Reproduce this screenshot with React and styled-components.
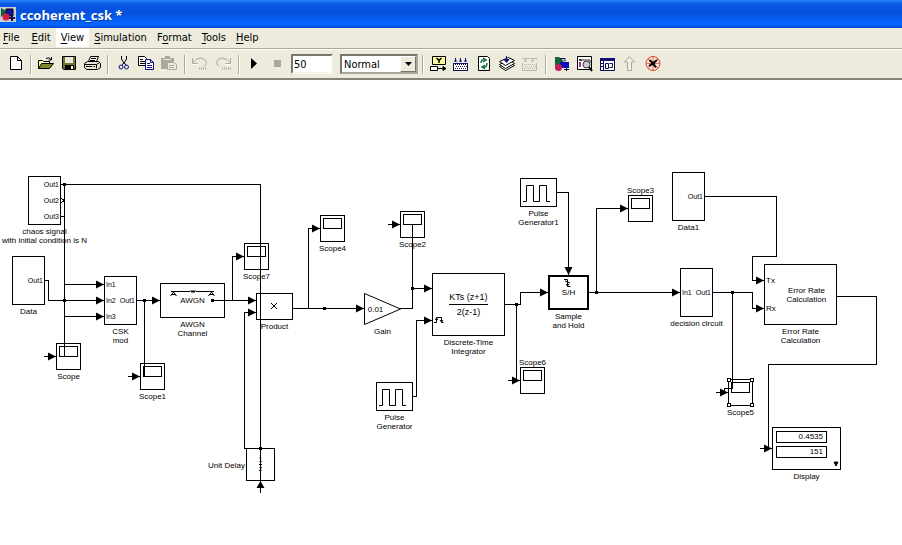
import React, { useState } from 'react'
import styled, { createGlobalStyle, css } from 'styled-components'

const menus = ['File', 'Edit', 'View', 'Simulation', 'Format', 'Tools', 'Help']
// index of the underlined access key, when it is not the first letter
const accessKey = { Format: 1 }

/* ---------- toolbar icons ---------- */

const Dots = ({ color }) => (
  <g stroke={color} fill="none">
    <path d="M3.5 9v8M17.5 9v8M3 16.5h15" />
    <path d="M5 10.5h12M6 12.5h12M5 14.5h12" strokeDasharray="1 1" />
  </g>
)

const icons = {
  new: <path d="M6.5 2.5h7l4 4v9h-11zM13.5 2.5v4h4" fill="#fff" stroke="#000" />,
  open: (
    <g stroke="#000">
      <path d="M3.5 14.5v-8h4l1 1h6v3" fill="#ffffb0" />
      <path d="M3.5 14.5l3-5h12l-4 5z" fill="#85852a" />
      <path d="M11 4.5q3-2 5 1M16.5 3v3h-3" fill="none" />
    </g>
  ),
  save: (
    <g>
      <path d="M4.5 2.5h13v13h-12l-1-1z" fill="#74742c" stroke="#000" />
      <path d="M7 3h8v6H7z" fill="#e9e8da" />
      <path d="M7 11h9v4H7z" fill="#000" />
      <path d="M13 12h2v3h-2z" fill="#fff" />
    </g>
  ),
  print: (
    <g stroke="#000" fill="#fff">
      <path d="M7.5 7.5l2-5h8l-2 5z" />
      <path d="M3.5 9.5l3-2h11l2 2v4l-3 2h-11l-2-2z" fill="#e5e4d5" />
      <path d="M3.5 10.5h12v4M15.5 10.5l3-2M10 4.5h5M9 6.5h5M5 12.5h9" fill="none" />
      <path d="M11 12.5h2" stroke="#b9b900" />
    </g>
  ),
  cut: (
    <g fill="none">
      <path d="M9.5 2v3l3 5M14.5 2v3l-3 5" stroke="#000" />
      <circle cx="9" cy="13" r="2" stroke="#101080" />
      <circle cx="14.5" cy="13" r="2" stroke="#101080" />
      <path d="M11.5 9l-1.5 2.5M12.5 9l1.5 2.5" stroke="#101080" />
    </g>
  ),
  copy: (
    <g>
      <path d="M3.5 2.5h6l2 2v7h-8z" fill="#fff" stroke="#000" />
      <path d="M5 5.5h3M5 7.5h5M5 9.5h5" stroke="#000" />
      <path d="M10.5 5.5h5l3 3v7h-8z" fill="#fff" stroke="#101080" />
      <path d="M15.5 5.5v3h3M12 9.5h3M12 11.5h5M12 13.5h5" fill="none" stroke="#101080" />
    </g>
  ),
  paste: (
    <g>
      <path d="M3 4h4V2h5v2h4v11H3z" fill="#aaa999" />
      <path d="M6 5.5h7" stroke="#ecebdc" />
      <path d="M9.5 8.5h6l3 2v5h-9z" fill="#ecebdc" stroke="#aaa999" />
      <path d="M11 11.5h5M11 13.5h5" stroke="#aaa999" />
    </g>
  ),
  undo: (
    <g fill="none" stroke="#aaa999">
      <path d="M4 8.5l3-3q5-3 9 0q3 4-1 7" />
      <path d="M3.5 4v5.5h5" />
      <path d="M10 14.5h8" strokeDasharray="1 1" strokeWidth="2" />
      <path d="M3 10.5h6" stroke="#fff" />
    </g>
  ),
  redo: (
    <g fill="none" stroke="#aaa999">
      <path d="M18 8.5l-3-3q-5-3-9 0q-3 4 1 7" />
      <path d="M18.5 4v5.5h-5" />
      <path d="M10 14.5h9" strokeDasharray="1 1" strokeWidth="2" />
      <path d="M13 10.5h6" stroke="#fff" />
    </g>
  ),
  play: <path d="M8 4l6 5.5L8 15z" fill="#000" />,
  stop: <path d="M8 6h7v7H8z" fill="#aaa999" />,
  model: (
    <g stroke="#000">
      <path d="M5.5 2.5h13v8h-13z" fill="#ffffa0" />
      <path d="M9.5 4l2.5 2.5L14.5 4M12 6v3" fill="none" strokeWidth="1.5" />
      <path d="M3.5 12.5h7v4h-7z" fill="#fff" />
      <path d="M10.5 14.5h7" fill="none" />
      <path d="M16 12.5l3 2-3 2z" />
    </g>
  ),
  build: (
    <g>
      <path d="M3 9h15v8H3z" fill="#fff" />
      <Dots color="#101040" />
      <path d="M5.5 4v4M10.5 4v4M15.5 4v4M4 7h3M9 7h3M14 7h3M3 9.5h15" stroke="#101080" />
    </g>
  ),
  refresh: (
    <g>
      <path d="M5.5 2.5h9l2 2v12h-11z" fill="#fff" stroke="#000" />
      <path d="M8 9q0-4 4-3M10 4l3 2-3 2M14 9q0 5-4 4M12 11l-3 2 3 2" fill="none" stroke="#147044" strokeWidth="1.5" />
    </g>
  ),
  stack: (
    <g stroke="#000" fill="#fff">
      <path d="M3.5 12.5l6 4 9-5-6-4z" />
      <path d="M3.5 10.5l6 4 9-5-6-4z" />
      <path d="M3.5 7.5l6 4 9-5-6-3z" />
      <path d="M10.5 2v6M8 5.5l2.5 3 2.5-3z" stroke="#101080" fill="#101080" />
    </g>
  ),
  buildOff: (
    <g>
      <Dots color="#b9b8a8" />
      <path d="M3 4.5h15M6.5 4v4M13.5 4v4M5 7h3M12 7h3" stroke="#b9b8a8" />
    </g>
  ),
  library: (
    <g>
      <path d="M5 3h4l5 4-5 5H5z" fill="#17603c" />
      <path d="M10 8h9v6h-9z" fill="#0c0cb4" />
      <circle cx="8.5" cy="13.5" r="3.5" fill="#c8195a" />
      <path d="M16.5 13v4M14 15.5h5" stroke="#101040" />
      <path d="M10 4.5h5v3" fill="none" stroke="#101040" />
    </g>
  ),
  explore: (
    <g>
      <path d="M4.5 2.5h14v13h-14z" fill="#fff" stroke="#000" />
      <path d="M6 5h3v2H6z" fill="#444" />
      <path d="M9 6h8v3" fill="none" stroke="#333" />
      <path d="M6 8h2v5H6z" fill="#b12aa0" />
      <circle cx="13.5" cy="10.5" r="3.5" fill="#c8d0d0" stroke="#333" />
      <path d="M16 13l3 4" stroke="#000" strokeWidth="2" />
    </g>
  ),
  debug: (
    <g>
      <path d="M4.5 4.5h14v12h-14z" fill="#fff" stroke="#101050" />
      <path d="M4 4h15v3H4z" fill="#101070" />
      <path d="M7.5 7v9M9.5 9.5h3v5h-3zM13.5 9.5h3v4h-3M5 9.5h2M5 12.5h2" fill="none" stroke="#101050" />
    </g>
  ),
  up: <path d="M10.5 2.5l5 5.5h-3v8.5h-4V8h-3z" fill="#f1f0e4" stroke="#aaa999" />,
  fan: (
    <g fill="none">
      <circle cx="11" cy="9.5" r="7" stroke="#d8442e" fill="#f8e4d8" />
      <path d="M6 5l10 9M16 5L6 14M11 3v13M4 9.5h14" stroke="#e07058" />
      <path d="M7.5 6l3.5 3.5 4-3.5M7 12l4-2.500 3 4" stroke="#000" strokeWidth="2" />
      <circle cx="11" cy="9.5" r="2" fill="#000" />
    </g>
  ),
}

const leftTools = [
  [['new', 'New model']],
  [['open', 'Open'], ['save', 'Save'], ['print', 'Print']],
  [['cut', 'Cut'], ['copy', 'Copy'], ['paste', 'Paste']],
  [['undo', 'Undo'], ['redo', 'Redo']],
  [['play', 'Start simulation'], ['stop', 'Stop']],
]

const rightTools = [
  [['model', 'Display block output'], ['build', 'Build model'], ['refresh', 'Refresh blocks'], ['stack', 'Update diagram'], ['buildOff', 'Build subsystem']],
  [['library', 'Library browser'], ['explore', 'Model explorer'], ['debug', 'Model browser'], ['up', 'Go to parent'], ['fan', 'Debug']],
]

const disabledTools = ['paste', 'undo', 'redo', 'stop', 'buildOff', 'up']

/* ---------- model data ---------- */

const scopes = [
  { name: 'Scope', x: 56, y: 263 },
  { name: 'Scope1', x: 140, y: 283 },
  { name: 'Scope7', x: 244, y: 163 },
  { name: 'Scope4', x: 320, y: 135 },
  { name: 'Scope2', x: 400, y: 131 },
  { name: 'Scope3', x: 628, y: 115, side: 'top' },
  { name: 'Scope6', x: 520, y: 287, side: 'top' },
  { name: 'Scope5', x: 728, y: 299, selected: true },
]

const subsystems = [
  { name: 'chaos signal\nwith initial condition is N', x: 28, y: 96, outs: ['Out1', 'Out2', 'Out3'] },
  { name: 'Data', x: 12, y: 176, outs: ['Out1'] },
  { name: 'CSK\nmod', x: 104, y: 196, ins: ['In1', 'In2', 'In3'], outs: ['Out1'] },
  { name: 'Data1', x: 672, y: 92, outs: ['Out1'] },
  { name: 'decision circuit', x: 680, y: 188, ins: ['In1'], outs: ['Out1'] },
]

const wires = [
  'M61 104.5H260.5V401',
  'M64.5 104V276.5H59',
  'M61 136.5H64',
  'M45 200.5H48.5V220.5H104',
  'M64 204.5H104',
  'M64 236.5H104',
  'M44 276.5H56',
  'M137 220.5H160',
  'M144.5 220V296.5',
  'M128 296.5H140',
  'M212 220.5H256',
  'M232.5 220V176.5H244',
  'M247 368.5H244.5V232.5H256',
  'M260.5 401V413',
  'M293 228.5H364',
  'M308.5 228V148.5H320',
  'M400 228.5H412.5V144',
  'M388 144.5H400',
  'M412 208.5H432',
  'M413 316.5H416.5V240.5H432',
  'M505 224.5H520.5V212.5H548',
  'M516.5 224V300.5M508 300.5H520',
  'M557 112.5H568.5V195',
  'M589 212.5H680',
  'M596.5 212V128.5H628',
  'M705 116.5H776.5V176.5H752.5V200.5H764',
  'M713 212.5H752.5V228.5H764',
  'M732.5 212V308.5H724.5V312M716 312.5H728',
  'M837 216.5H876.5V284.5H768.5V368M760 368.5H772',
]

const arrows = [
  [104, 204], [104, 220], [104, 236], [56, 276], [160, 220], [140, 296],
  [256, 220], [244, 176], [256, 232], [320, 148], [364, 228], [400, 144],
  [432, 208], [432, 240], [548, 212], [520, 300], [628, 128], [680, 212],
  [764, 200], [764, 228], [728, 312], [772, 368],
]

const joints = [
  [64, 104], [64, 220], [144, 220], [212, 220], [260, 368], [324, 228],
  [412, 208], [516, 224], [596, 212], [732, 212],
]

/* ---------- parts ---------- */

const Tool = ({ tool }) => {
  const [id, label] = tool
  return (
    <ToolButton type="button" aria-label={label} title={label} disabled={disabledTools.includes(id)}>
      <svg width="21" height="20" viewBox="0 0 21 20">{icons[id]}</svg>
    </ToolButton>
  )
}

const ToolGroups = ({ groups }) =>
  groups.map((group, i) => (
    <React.Fragment key={i}>
      {i > 0 && <Separator />}
      {group.map((tool) => <Tool key={tool[0]} tool={tool} />)}
    </React.Fragment>
  ))

const MenuLabel = ({ text }) => {
  const i = accessKey[text] || 0
  return <>{text.slice(0, i)}<u>{text[i]}</u>{text.slice(i + 1)}</>
}

const Block = ({ x, y, w, h, name, side, bold, children }) => (
  <Node $x={x} $y={y} $w={w}>
    <Shape $w={w} $h={h} $bold={bold}>{children}</Shape>
    <BlockName $side={side}>{name}</BlockName>
  </Node>
)

const Scope = ({ x, y, name, side, selected }) => (
  <Block x={x} y={y} w={25} h={27} name={name} side={side}>
    <Screen />
    {selected && <Handles><i /><i /><i /><i /></Handles>}
  </Block>
)

const Subsystem = ({ x, y, name, ins = [], outs = [] }) => (
  <Block x={x} y={y} w={33} h={49} name={name}>
    <Ports>{ins.map((p) => <span key={p}>{p}</span>)}</Ports>
    <Ports $end>{outs.map((p) => <span key={p}>{p}</span>)}</Ports>
  </Block>
)

const Pulse = ({ x, y, name }) => (
  <Block x={x} y={y} w={37} h={29} name={name}>
    <Drawing viewBox="0 0 35 27">
      <path d="M2 22.5h3.5v-16h7v16h6v-16h7v16H29" />
    </Drawing>
  </Block>
)

const Wires = () => (
  <WireLayer aria-hidden="true">
    <g fill="none" stroke="#000" shapeRendering="crispEdges">
      {wires.map((d) => <path key={d} d={d} />)}
      <path d="M61 118l3 2.5-3 2.5" />
    </g>
    {arrows.map(([x, y]) => (
      <path key={`${x}-${y}`} d={`M${x} ${y + 0.5}l-8-4v8z`} />
    ))}
    <path d="M568.5 195l-4-8h8zM260.5 401l-4 7h8z" />
    {joints.map(([x, y]) => (
      <rect key={`${x}-${y}`} x={x - 1} y={y - 1} width="3" height="3" />
    ))}
  </WireLayer>
)

const App = () => {
  const [stopTime, setStopTime] = useState('50')
  const [mode, setMode] = useState('Normal')

  return (
    <Window>
      <GlobalStyle />
      <TitleBar>
        <svg width="16" height="15" viewBox="0 0 16 15" aria-hidden="true">
          <path d="M0 0h16v15H0z" fill="#c9cbd8" />
          <path d="M1 1l7 4-7 5z" fill="#14603a" />
          <path d="M6 2h7v7H6z" fill="#1515a0" stroke="#000" />
          <circle cx="6" cy="10" r="3.5" fill="#d81d3c" />
          <path d="M12 8v6M9 11h6" stroke="#101050" strokeWidth="2" />
        </svg>
        <h1>ccoherent_csk *</h1>
      </TitleBar>

      <MenuBar>
        {menus.map((m) => (
          <MenuItem key={m} type="button" $active={m === 'View'}>
            <MenuLabel text={m} />
          </MenuItem>
        ))}
      </MenuBar>

      <Toolbar>
        <ToolGroups groups={leftTools} />
        <StopTime aria-label="Stop time" value={stopTime} onChange={(e) => setStopTime(e.target.value)} />
        <ModeBox>
          <select aria-label="Simulation mode" value={mode} onChange={(e) => setMode(e.target.value)}>
            <option>Normal</option>
            <option>Accelerator</option>
            <option>External</option>
          </select>
          <DropArrow>
            <svg width="7" height="4" viewBox="0 0 7 4"><path d="M0 0h7L3.5 4z" /></svg>
          </DropArrow>
        </ModeBox>
        <Separator />
        <ToolGroups groups={rightTools} />
      </Toolbar>

      <Canvas>
        {subsystems.map((s) => <Subsystem key={s.name} {...s} />)}
        {scopes.map((s) => <Scope key={s.name} {...s} />)}

        <Block x={160} y={203} w={65} h={35} name={'AWGN\nChannel'}>
          <Drawing viewBox="0 0 63 33">
            <path d="M10 7.5h19l1-1 1 2 1-2 1 2 1-2 1 1h18M12.5 8l-3 4M12.5 8l3 4M10 10.5h5M50.5 8l-3 4M50.5 8l3 4M48 10.5h5" />
          </Drawing>
          <BlockText>AWGN</BlockText>
        </Block>

        <Block x={256} y={213} w={37} h={27} name="Product">
          <Drawing viewBox="0 0 35 25"><path d="M14 9l6 6M20 9l-6 6" /></Drawing>
        </Block>

        <Node $x={364} $y={213} $w={37}>
          <GainShape>
            <Drawing viewBox="0 0 37 32"><path d="M.5.5v31l36-15.5z" /></Drawing>
            <BlockText>0.01</BlockText>
          </GainShape>
          <BlockName>Gain</BlockName>
        </Node>

        <Block x={432} y={193} w={73} h={63} name={'Discrete-Time\nIntegrator'}>
          <Fraction>
            <span>KTs (z+1)</span>
            <span>2(z-1)</span>
          </Fraction>
          <Drawing viewBox="0 0 71 61">
            <path d="M1 48.5h2.5v-5h5v5h2M2 46l1.5-2L5 46M7 46l1.5 2 1.5-2" />
          </Drawing>
        </Block>

        <Block x={246} y={368} w={29} h={33} name="Unit Delay" side="left">
          <Fraction $small>
            <span>1</span>
            <span>z</span>
          </Fraction>
        </Block>

        <Pulse x={376} y={302} name={'Pulse\nGenerator'} />
        <Pulse x={520} y={98} name={'Pulse\nGenerator1'} />

        <Block x={548} y={195} w={41} h={35} name={'Sample\nand Hold'} bold>
          <Drawing viewBox="0 0 37 31">
            <path d="M14 2.5h3.5v7h3M15 4l5 2M16 7l1.5 2L19 7" />
          </Drawing>
          <BlockText>S/H</BlockText>
        </Block>

        <Block x={764} y={184} w={73} h={61} name={'Error Rate\nCalculation'}>
          <RatePorts><span>Tx</span><span>Rx</span></RatePorts>
          <BlockText>{'Error Rate\nCalculation'}</BlockText>
        </Block>

        <Block x={772} y={347} w={69} h={43} name="Display">
          <Readout>
            <output>0.4535</output>
            <output>151</output>
          </Readout>
          <Drawing viewBox="0 0 67 41"><path d="M61 34h4l-2 4z" fill="#000" /></Drawing>
        </Block>

        <Wires />
      </Canvas>
    </Window>
  )
}

/* ---------- styles ---------- */

const GlobalStyle = createGlobalStyle`
  body{
    margin:0;
    background:#fff;
  }
  *{
    box-sizing:border-box;
  }
`

const uiFont = css`
  font-family:"DejaVu Sans Condensed","DejaVu Sans",sans-serif;
  font-size:11px;
  color:#000;
`

const Window = styled.div`
  min-height:100vh;
  display:flex;
  flex-direction:column;
  background:#fff;
`

const TitleBar = styled.header`
  height:28px;
  display:flex;
  align-items:center;
  gap:4px;
  background:linear-gradient(#2a86f5 0,#0a5ae4 4px,#0450dd 12px,#0560f6 20px,#0666ff 25px,#0345c8 28px);

  h1{
    margin:0;
    padding-top:2px;
    font:bold 13px "Open Sans",sans-serif;
    color:#fff;
    text-shadow:1px 1px #0a3aa0;
  }
`

const MenuBar = styled.nav`
  height:21px;
  display:flex;
  align-items:flex-start;
  background:#ecebdc;
  border-bottom:1px solid #aaa999;
`

const MenuItem = styled.button`
  ${uiFont}
  height:19px;
  padding:0 5px;
  border:none;
  background:${(p) => (p.$active ? '#fff' : 'transparent')};

  &:first-child{
    padding:0 7px 0 3px;
  }
  u{
    text-underline-offset:2px;
  }
`

const Toolbar = styled.div`
  height:31px;
  display:flex;
  align-items:center;
  padding-left:3px;
  background:#ecebdc;
  border-top:1px solid #fff;
  border-bottom:2px solid #85847a;
`

const ToolButton = styled.button`
  flex:none;
  width:23px;
  height:22px;
  padding:0 1px;
  border:none;
  background:transparent;

  svg{
    display:block;
  }
`

const Separator = styled.span`
  flex:none;
  width:2px;
  height:19px;
  margin:0 2px 0 4px;
  border-left:1px solid #aaa999;
  border-right:1px solid #fff;
`

const StopTime = styled.input`
  ${uiFont}
  width:42px;
  height:20px;
  margin:0 7px 0 3px;
  padding:0 1px;
  border:2px solid;
  border-color:#77766c #f6f5ee #f6f5ee #77766c;
  border-radius:0;
  background:#fff;
`

const ModeBox = styled.div`
  position:relative;
  width:78px;
  height:20px;
  border:2px solid;
  border-color:#77766c #aaa999 #aaa999 #77766c;
  background:#fff;

  select{
    ${uiFont}
    display:block;
    appearance:none;
    width:100%;
    height:100%;
    padding:0 2px;
    border:none;
    border-radius:0;
    background:transparent;
  }
`

const DropArrow = styled.span`
  position:absolute;
  top:0;
  right:0;
  bottom:0;
  width:16px;
  display:grid;
  place-items:center;
  background:#ecebdc;
  border:1px solid;
  border-color:#fff #77766c #77766c #fff;
  pointer-events:none;
`

const Canvas = styled.main`
  position:relative;
  flex:1;
  min-height:420px;
  overflow:hidden;
  font-family:"Liberation Sans",Arial,sans-serif;
  font-size:8px;
  line-height:9px;
  color:#000;
`

const Node = styled.div`
  position:absolute;
  left:${(p) => p.$x}px;
  top:${(p) => p.$y}px;
  width:${(p) => p.$w}px;
  display:flex;
  flex-direction:column;
  align-items:center;
`

const Shape = styled.div`
  position:relative;
  flex:none;
  width:${(p) => p.$w}px;
  height:${(p) => p.$h}px;
  display:flex;
  align-items:center;
  justify-content:space-between;
  border:${(p) => (p.$bold ? 2 : 1)}px solid #000;
`

const nameSides = {
  top: css`
    position:absolute;
    bottom:100%;
  `,
  left: css`
    position:absolute;
    top:11px;
    right:100%;
    padding-right:1px;
  `,
}

const BlockName = styled.div`
  padding-top:2px;
  white-space:pre;
  text-align:center;
  ${(p) => nameSides[p.$side]}
`

const BlockText = styled.span`
  flex:1;
  white-space:pre;
  text-align:center;
`

const Screen = styled.span`
  align-self:flex-start;
  width:19px;
  height:11px;
  margin:2px;
  border:1px solid #000;
`

const Handles = styled.span`
  position:absolute;
  inset:-2px;
  display:grid;
  grid-template-columns:4px 4px;
  place-content:space-between;

  i{
    width:4px;
    height:4px;
    border:1px solid #000;
    background:#fff;
  }
`

const Ports = styled.div`
  align-self:stretch;
  display:flex;
  flex-direction:column;
  justify-content:space-around;
  padding:0 1px;
  font-size:7px;
  text-align:${(p) => (p.$end ? 'right' : 'left')};
`

const RatePorts = styled(Ports)`
  padding:2px 1px;
  font-size:8px;
`

const GainShape = styled.div`
  position:relative;
  width:37px;
  height:32px;
  display:flex;
  align-items:center;
  padding-right:14px;
`

const Fraction = styled.div`
  flex:1;
  display:flex;
  flex-direction:column;
  align-items:center;
  line-height:${(p) => (p.$small ? 8 : 14)}px;
  font-size:${(p) => (p.$small ? 7 : 9)}px;

  span:first-child{
    border-bottom:1px solid #000;
  }
`

const Readout = styled.div`
  align-self:stretch;
  display:flex;
  flex-direction:column;
  gap:3px;
  padding:3px;

  output{
    width:51px;
    height:12px;
    padding-right:3px;
    border:1px solid #000;
    text-align:right;
  }
`

const Drawing = styled.svg`
  position:absolute;
  inset:0;
  width:100%;
  height:100%;
  fill:none;
  stroke:#000;
`

const WireLayer = styled.svg`
  position:absolute;
  inset:0;
  width:100%;
  height:100%;
  pointer-events:none;
`

export default App
